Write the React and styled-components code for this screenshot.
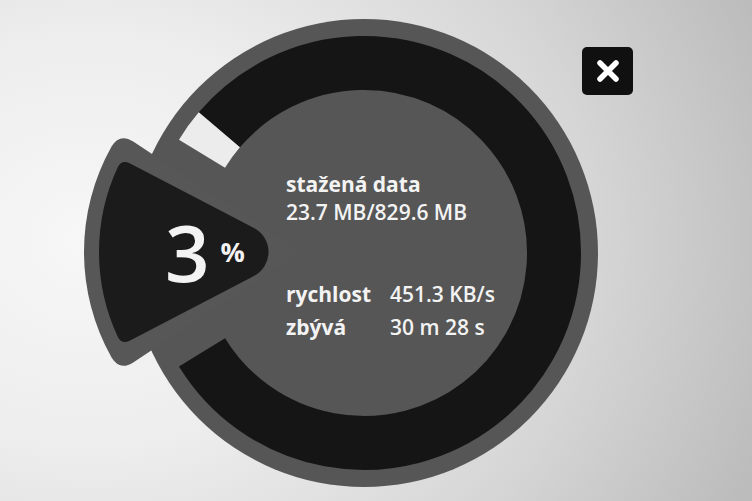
import React from "react";
import styled, { createGlobalStyle } from "styled-components";

const Global = createGlobalStyle`
  html, body { margin: 0; padding: 0; }
  body { font-family: "Open Sans", "Noto Sans", sans-serif; overflow: hidden; }
`;

const Stage = styled.main`
  position: relative;
  box-sizing: border-box;
  width: 752px;
  height: 501px;
  display: flex;
  padding-left: 70px;
  background:
    radial-gradient(ellipse 95% 120% at 12% 48%, #f7f7f7 0%, #ededed 35%, #d6d6d6 70%, #bcbcbc 100%);
`;

const Dial = styled.section`
  display: grid;
  width: 540px;
  height: 501px;
  & > * { grid-area: 1 / 1; }
`;

const Drawing = styled.svg`
  display: block;
  width: 540px;
  height: 501px;
`;

const Readout = styled.div`
  display: flex;
  align-items: flex-start;
  padding: 170px 0 0 95px;
  color: #f3f3f3;
`;

const Percent = styled.div`
  display: flex;
  align-items: flex-start;
  width: 121px;
  margin-top: 43px;
`;

const Big = styled.span`
  font-size: 78px;
  line-height: 78px;
  font-weight: 600;
`;

const Unit = styled.span`
  font-size: 27px;
  line-height: 28px;
  font-weight: 700;
  margin: 25px 0 0 11px;
`;

const Info = styled.div`
  display: flex;
  flex-direction: column;
`;

const Text = styled.div`
  font-size: 21px;
  line-height: 28px;
  font-weight: ${(p) => (p.$bold ? 700 : 600)};
  white-space: nowrap;
`;

const Stats = styled.div`
  display: grid;
  grid-template-columns: 104px auto;
  margin-top: 52px;
  font-size: 21px;
  line-height: 33px;
  white-space: nowrap;
`;

const Label = styled.span`
  font-weight: 700;
`;

const Val = styled.span`
  font-weight: 600;
`;

const CloseButton = styled.button`
  position: absolute;
  top: 47px;
  left: 582px;
  width: 51px;
  height: 48px;
  padding: 0;
  border: none;
  border-radius: 5px;
  background: #101010;
  display: flex;
  align-items: center;
  justify-content: center;
  cursor: pointer;
`;

const CX = 364;
const CY = 253;

function polar(r, deg) {
  const a = (deg * Math.PI) / 180;
  return [CX + r * Math.cos(a), CY - r * Math.sin(a)];
}

function pt(p) {
  return `${p[0].toFixed(2)} ${p[1].toFixed(2)}`;
}

function sector(ax, ay, R, halfDeg, rApex, c) {
  const a = (halfDeg * Math.PI) / 180;
  const uT = [-Math.cos(a), -Math.sin(a)];
  const uB = [-Math.cos(a), Math.sin(a)];
  const along = (u, d) => [ax + u[0] * d, ay + u[1] * d];
  const onArc = (phi) => [ax + R * Math.cos(phi), ay + R * Math.sin(phi)];
  const d = rApex > 0 ? rApex / Math.tan(a) : 0;
  const P1 = along(uT, d);
  const P2 = along(uB, d);
  const T = along(uT, R);
  const B = along(uB, R);
  const T1 = along(uT, R - c);
  const B2 = along(uB, R - c);
  const del = c / R;
  const T2 = onArc(Math.PI + a - del);
  const B1 = onArc(Math.PI - a + del);
  let s = `M ${pt(P1)} L ${pt(T1)} Q ${pt(T)} ${pt(T2)} A ${R} ${R} 0 0 0 ${pt(B1)} Q ${pt(B)} ${pt(B2)} L ${pt(P2)}`;
  if (rApex > 0) s += ` A ${rApex} ${rApex} 0 0 0 ${pt(P1)}`;
  return s + " Z";
}

const START = 148.5;
const TOTAL = 297;
const RING_R = 190;
const RING_W = 54;

function ProgressDial({ progress }) {
  const done = TOTAL * progress;
  const ringPath = `M ${pt(polar(RING_R, START - done))} A ${RING_R} ${RING_R} 0 1 1 ${pt(
    polar(RING_R, START - TOTAL)
  )}`;
  const donePath = `M ${pt(polar(RING_R, START))} A ${RING_R} ${RING_R} 0 0 1 ${pt(
    polar(RING_R, START - done)
  )}`;
  return (
    <Drawing viewBox="70 0 540 501">
      <circle cx={CX} cy={CY} r={234} fill="#565656" />
      <path d={sector(300, 252, 216, 33.5, 0, 16)} fill="#575757" />
      <path d={ringPath} fill="none" stroke="#151515" strokeWidth={RING_W} />
      <path d={donePath} fill="none" stroke="#ececec" strokeWidth={RING_W} />
      <path d={sector(300, 252, 201, 27.5, 27, 9)} fill="#1b1b1b" />
    </Drawing>
  );
}

export default function App() {
  return (
    <>
      <Global />
      <Stage>
        <Dial>
          <ProgressDial progress={0.03} />
          <Readout>
            <Percent>
              <Big>3</Big>
              <Unit>%</Unit>
            </Percent>
            <Info>
              <Text $bold>stažená data</Text>
              <Text>23.7 MB/829.6 MB</Text>
              <Stats>
                <Label>rychlost</Label>
                <Val>451.3 KB/s</Val>
                <Label>zbývá</Label>
                <Val>30 m 28 s</Val>
              </Stats>
            </Info>
          </Readout>
        </Dial>
        <CloseButton aria-label="zavřít">
          <svg width="24" height="24" viewBox="0 0 24 24">
            <path d="M4 4 L20 20 M20 4 L4 20" stroke="#fff" strokeWidth="5.5" strokeLinecap="round" />
          </svg>
        </CloseButton>
      </Stage>
    </>
  );
}
